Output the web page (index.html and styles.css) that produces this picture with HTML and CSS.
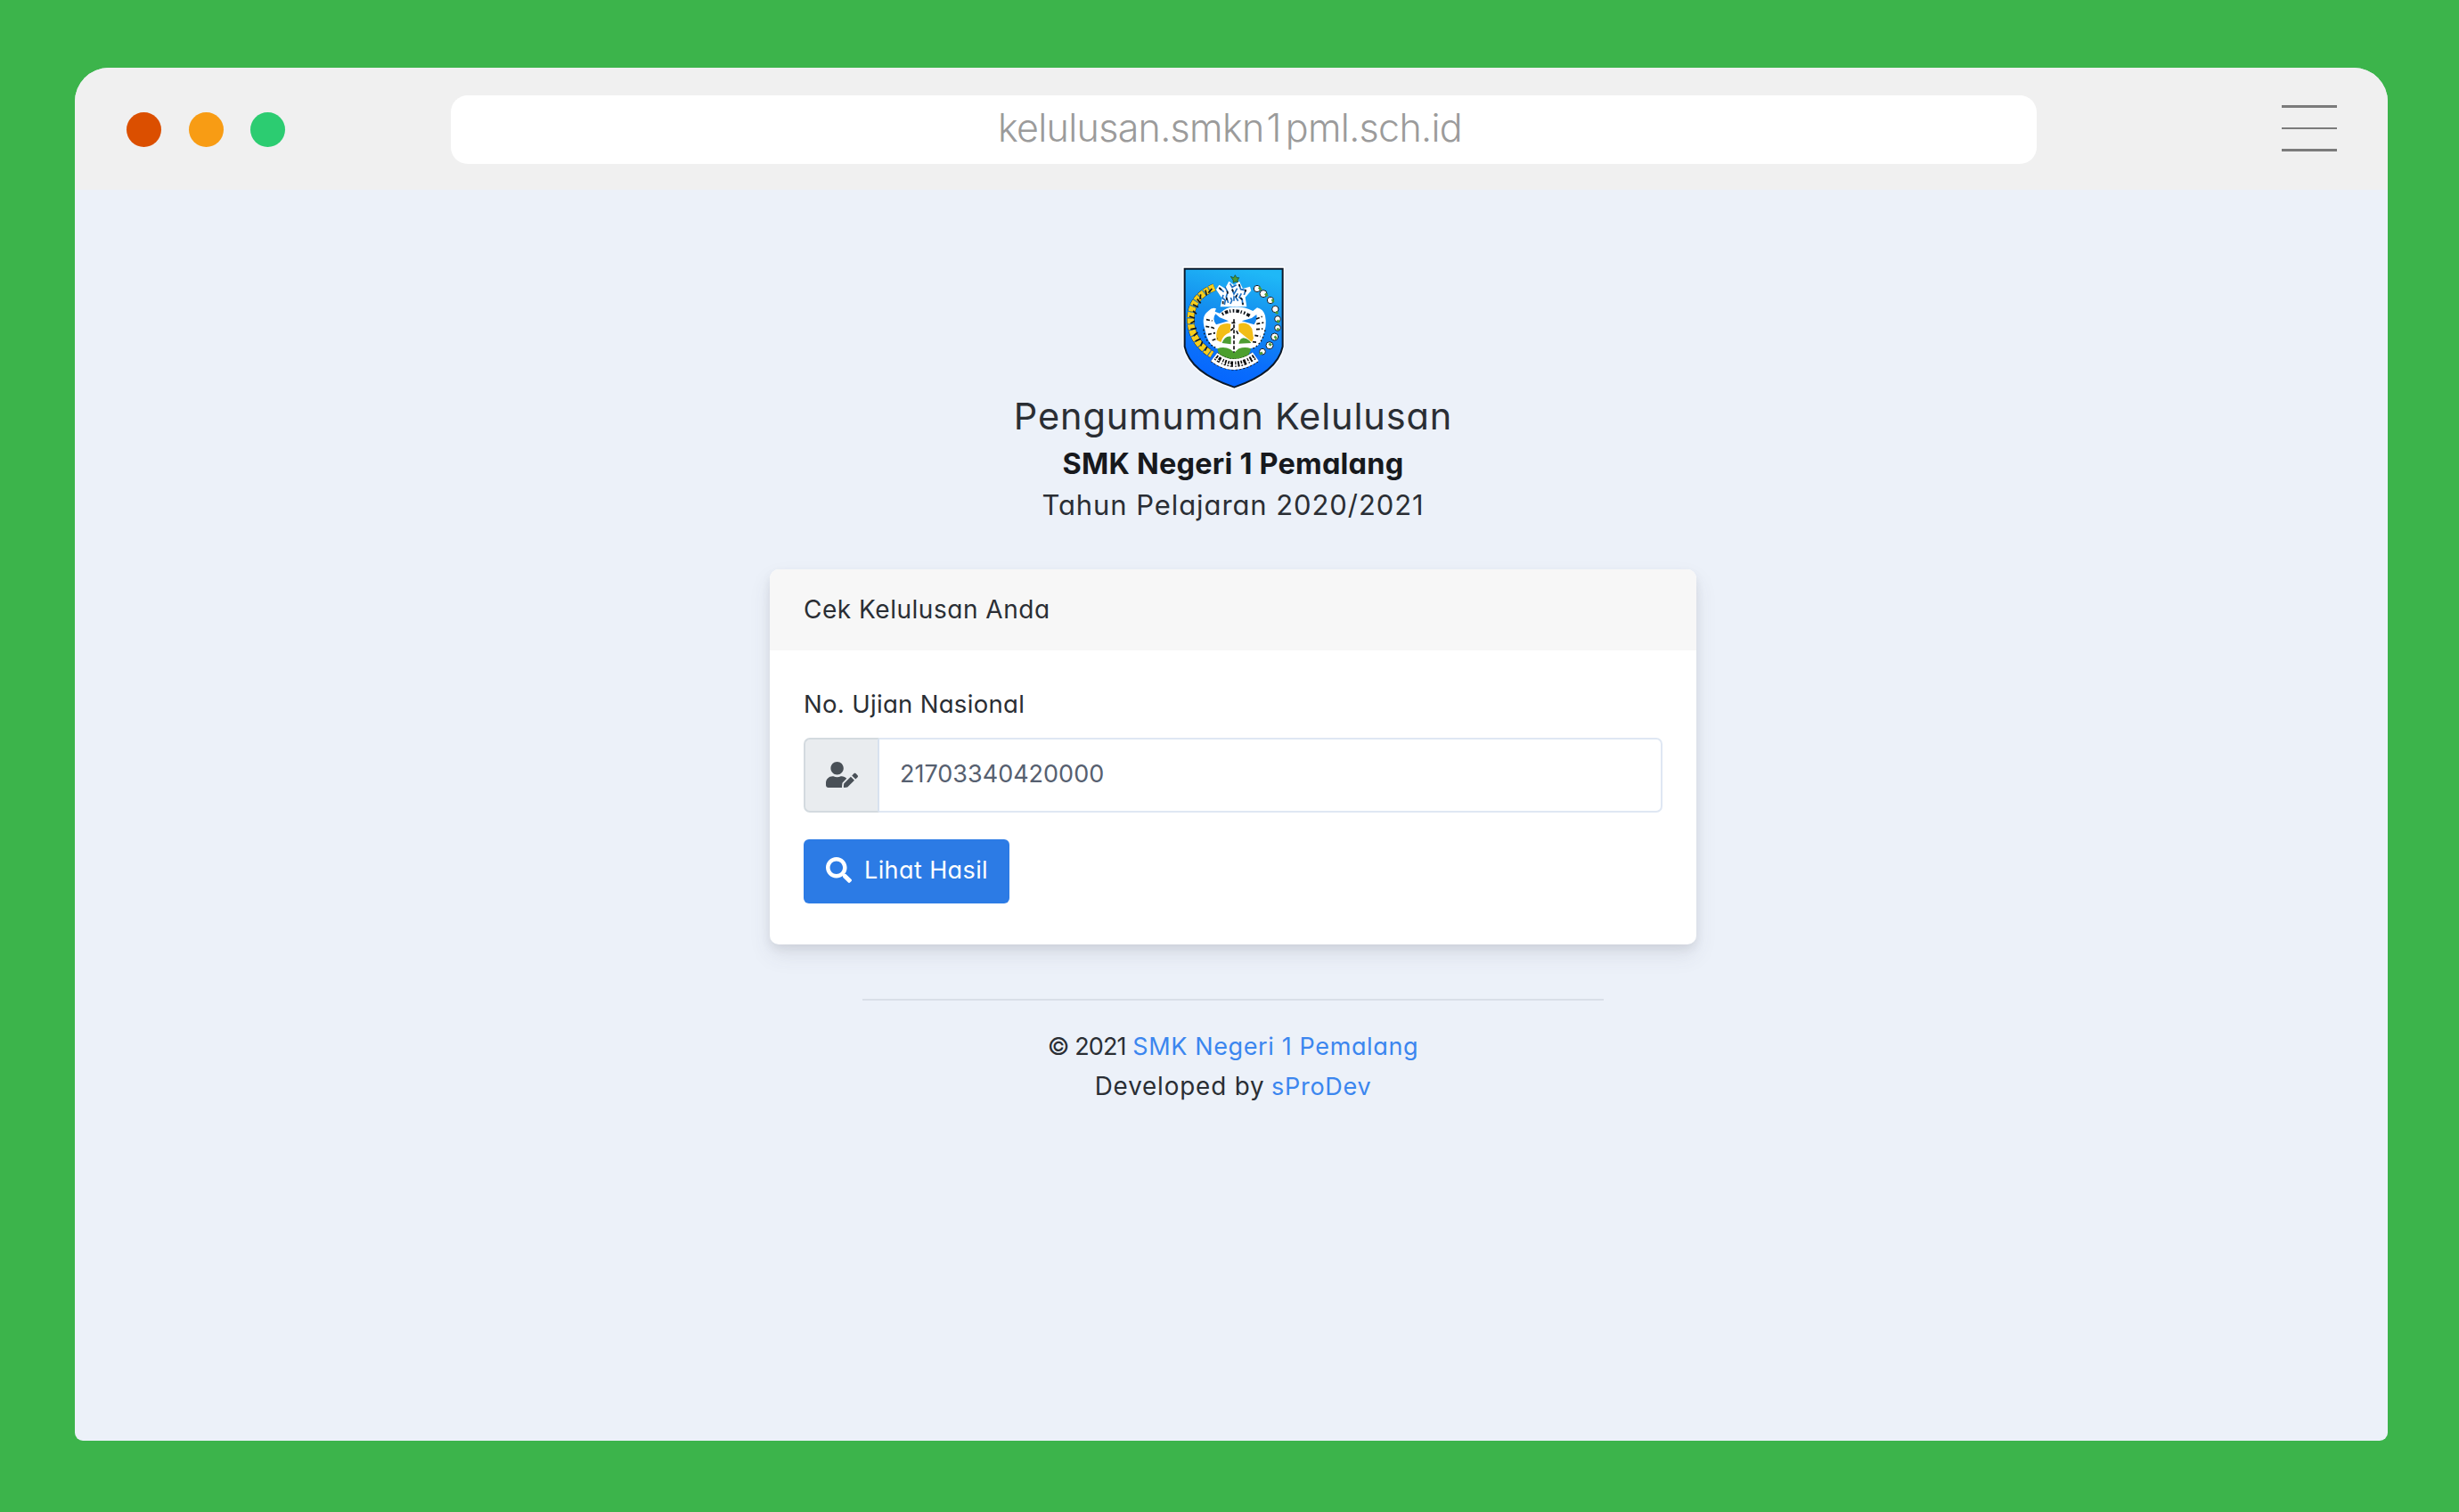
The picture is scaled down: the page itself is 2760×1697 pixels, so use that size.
FILE: index.html
```html
<!DOCTYPE html>
<html lang="id">
<head>
<meta charset="utf-8">
<title>Pengumuman Kelulusan</title>
<link rel="stylesheet" href="styles.css">
</head>
<body>
<div class="window">
  <header class="toolbar">
    <div class="dots"><span class="dot dot-close"></span><span class="dot dot-min"></span><span class="dot dot-max"></span></div>
    <div class="address"><span class="url">kelulusan.smkn<span class="digit">1</span>pml.sch.id</span></div>
    <div class="menu"><span></span><span></span><span></span></div>
  </header>
  <main class="page">
    <svg class="emblem" viewBox="50 28 345 414" aria-hidden="true">
      <defs>
        <linearGradient id="sky" x1="0.6" y1="0" x2="0.4" y2="1">
          <stop offset="0" stop-color="#1fb8f7"/><stop offset="0.35" stop-color="#1592ef"/><stop offset="0.75" stop-color="#0a6ffb"/><stop offset="1" stop-color="#0464ff"/>
        </linearGradient>
      </defs>
      <path d="M58 36H388V298Q370 385 225 435Q76 385 58 298Z" fill="none" stroke="#fff" stroke-width="14"/>
      <path d="M58 36H388V298Q370 385 225 435Q76 385 58 298Z" fill="url(#sky)" stroke="#0c1a2c" stroke-width="6"/>
      <!-- rice wreath -->
      <path d="M158 98Q80 130 78 205Q78 280 150 325" fill="none" stroke="#16181a" stroke-width="25" stroke-dasharray="17 3"/>
      <path d="M158 98Q80 130 78 205Q78 280 150 325" fill="none" stroke="#f6cd1c" stroke-width="23" stroke-dasharray="17 3"/>
      <path d="M150 103l-12 14M128 108l4 18M112 122l-2 17M100 138l12 14M86 156l18 9M86 178l12 10M74 196l18 6M78 220l14-8M78 240l20-4M88 262l14-12M94 280l18-8M112 296l6-15M126 312l8-14" stroke="#16181a" stroke-width="5"/>
      <!-- cotton wreath -->
      <g fill="#fff" stroke="#16202a" stroke-width="3">
        <circle cx="302" cy="103" r="11"/><circle cx="323" cy="120" r="12"/><circle cx="347" cy="142" r="11"/><circle cx="363" cy="172" r="11"/><circle cx="371" cy="205" r="10"/><circle cx="371" cy="235" r="10"/><circle cx="361" cy="265" r="12"/><circle cx="344" cy="294" r="12"/><circle cx="320" cy="315" r="10"/>
      </g>
      <path d="M308 98l8 10M329 119l8 9M353 138l4 10M364 181l8 6M370 209l6 8M369 242l6-5M361 263l6 9M342 288l8 6M310 324l10-6" stroke="#4c9a34" stroke-width="8"/>
      <path d="M213 62l10 4 5-9 5 9 8 0-5 9 3 7-9-3-8 4-1-9z" fill="#4c9a34" stroke="#1b3d16" stroke-width="2"/>
      <!-- plume -->
      <path d="M178 164L184 136 164 106 174 90 194 102 207 78 224 91 242 78 254 103 278 96 282 110 262 132 267 164Z" fill="#fff"/>
      <path d="M174 100l16 14M194 97l9 18-5 14 7 22M211 86l7 12 14-8M218 105l6 16 11-19M241 88l6 17 14 3M237 119l-7 13 8 12M188 124l-3 10 10 8-3 15M213 133l4 10-5 11M249 119l-7 13 10 8 1 15M264 106l-6 18M224 128v16" fill="none" stroke="#1c6ec0" stroke-width="5"/>
      <path d="M174 100l8 7M201 111l2 9M198 133l3 9M218 105l3 8M241 88l3 8M233 125l-3 7M187 145v10M246 133l6 7M254 150v8M264 106l-2 8" stroke="#10151c" stroke-width="5"/>
      <!-- wings -->
      <path d="M176 186Q202 163 225 165Q257 163 288 178L302 167Q323 172 329 194Q337 229 320 268Q309 303 278 305L228 318 162 303Q134 286 126 240Q112 196 138 178Q151 164 164 170L160 180Z" fill="#fff"/>
      <path d="M162 188l14 12 30 12-42 12Q149 206 162 188ZM300 190l-16 12-34 10 42 12Q304 206 300 190Z" fill="#1486ef"/>
      <path d="M166 276Q160 244 178 226Q197 216 213 222L211 250Q187 258 180 283Z" fill="#f2bd16"/>
      <path d="M240 222Q270 210 285 238L290 270 284 282 240 246Z" fill="#f2bd16"/>
      <path d="M184 286Q193 260 214 264V290Z" fill="#4d9d31"/><path d="M240 288Q248 256 276 278L282 286Z" fill="#4d9d31"/>
      <path d="M168 305Q190 296 212 307L225 318 240 305Q262 297 281 305Q276 342 225 350Q174 342 168 305Z" fill="#4c9f2e"/>
      <path d="M184 189Q226 164 277 194" fill="none" stroke="#10151c" stroke-width="11" stroke-dasharray="5 6 11 5 4 7"/>
      <path d="M224 206v112M216 218h18M213 244l12-10M238 256l-6-12M131 207l20 4M129 230l24 4 9 7M137 257l24-5M151 277l18-7M299 205l20-8M300 222l24-5M299 240l22-2M294 260l19 4M287 282l15 2" fill="none" stroke="#111" stroke-width="5" stroke-dasharray="12 6"/>
      <path d="M122 240Q126 287 166 303M329 242Q320 289 284 307" fill="none" stroke="#111" stroke-width="4" stroke-dasharray="5 7"/>
      <!-- name ribbon -->
      <path d="M157 333Q224 384 297 332" fill="none" stroke="#111" stroke-width="39" stroke-dasharray="6 5"/>
      <path d="M157 333Q224 384 297 332" fill="none" stroke="#fff" stroke-width="35"/>
      <path d="M163 334Q224 381 293 333" fill="none" stroke="#0d0d0d" stroke-width="19" stroke-dasharray="5 4 9 7 4 5 6 5"/>
      <path d="M162 338Q224 384 293 337" fill="none" stroke="#fff" stroke-width="4" stroke-dasharray="14 8"/>
    </svg>
    <h1 class="title">Pengumuman Kelulusan</h1>
    <h2 class="school">SMK Negeri 1 Pemalang</h2>
    <p class="year">Tahun Pelajaran 2020/2021</p>
    <section class="card">
      <div class="card-header">Cek Kelulusan Anda</div>
      <form class="card-body">
        <label class="label">No. Ujian Nasional</label>
        <div class="input-group">
          <span class="addon"><svg class="icon-user" viewBox="0 0 640 512"><path fill="currentColor" d="M224 256c70.7 0 128-57.3 128-128S294.7 0 224 0 96 57.3 96 128s57.3 128 128 128zm89.6 32h-16.7c-22.2 10.2-46.9 16-72.9 16s-50.6-5.8-72.9-16h-16.7C60.2 288 0 348.2 0 422.4V464c0 26.5 21.5 48 48 48h274.9c-2.4-6.8-3.4-14-2.6-21.3l6.8-60.9 1.2-11.1 7.9-7.9 77.3-77.3c-24.5-27.7-60-45.5-99.9-45.5zm45.3 145.3l-6.8 61c-1.1 10.2 7.5 18.8 17.6 17.6l60.9-6.8 137.9-137.9-71.7-71.7-137.9 137.8zM633 268.9L595.1 231c-9.3-9.3-24.5-9.3-33.8 0l-37.8 37.8-4.1 4.1 71.8 71.7 41.8-41.8c9.3-9.4 9.3-24.5 0-33.9z"/></svg></span>
          <span class="field">21703340420000</span>
        </div>
        <button class="button" type="button"><svg class="icon-search" viewBox="0 0 512 512"><path fill="currentColor" d="M505 442.7L405.3 343c-4.5-4.5-10.6-7-17-7H372c27.6-35.3 44-79.7 44-128C416 93.1 322.9 0 208 0S0 93.1 0 208s93.1 208 208 208c48.3 0 92.7-16.4 128-44v16.3c0 6.4 2.5 12.5 7 17l99.7 99.7c9.4 9.4 24.6 9.4 33.9 0l28.3-28.3c9.4-9.4 9.4-24.6.1-34zM208 336c-70.7 0-128-57.2-128-128 0-70.7 57.2-128 128-128 70.7 0 128 57.2 128 128 0 70.7-57.2 128-128 128z"/></svg><span class="button-text">Lihat Hasil</span></button>
      </form>
    </section>
    <hr class="rule">
    <footer class="footer">
      <div><span class="copyright">© 2021</span> <a class="school-link">SMK Negeri 1 Pemalang</a></div>
      <div><span class="developed">Developed by</span> <a class="dev-link">sProDev</a></div>
    </footer>
  </main>
</div>
</body>
</html>
```
FILE: styles.css
```css
* { box-sizing: border-box; }
body {
  margin: 0;
  height: 1697px;
  padding: 76px 80px 80px 84px;
  background: #3cb44b;
  color: #2a2e34;
  font-family: Inter, "Liberation Sans", sans-serif;
  font-feature-settings: "cv11";
  overflow: hidden;
}
.window {
  display: flex;
  flex-direction: column;
  height: 1541px;
  border-radius: 38px 38px 9px 9px;
  background: #ecf1f9;
  overflow: hidden;
}
.toolbar {
  display: grid;
  grid-template-columns: 422px 1780px 1fr;
  flex: none;
  align-items: center;
  height: 137px;
  background: #f0f0f0;
}
.dots { display: flex; gap: 30.7px; padding: 2px 0 0 58px; }
.dot { width: 39px; height: 39px; border-radius: 50%; }
.dot-close { background: #db4f00; }
.dot-min { background: #f89c14; }
.dot-max { background: #2ccc71; }
.address {
  display: flex;
  align-items: center;
  justify-content: center;
  height: 77px;
  margin-top: 2px;
  padding: 0 31px 5px 0;
  border-radius: 19px;
  background: #fff;
}
.url {
  color: #9b9b9b;
  font-size: 43px;
  font-weight: 300;
  letter-spacing: -0.7px;
  font-feature-settings: normal;
}
.digit { padding: 0 5px 0 3px; }
.menu {
  display: flex;
  flex-direction: column;
  justify-self: end;
  gap: 22px;
  width: 62px;
  margin: 0 57px 1px 0;
}
.menu span { height: 2.5px; background: #7b7b7b; }
.page {
  display: flex;
  flex-direction: column;
  align-items: center;
  padding: 86px 0 0 4px;
}
.emblem { width: 115px; height: 138px; }
.title, .school, .year { margin: 0; white-space: nowrap; }
.title { margin-top: 3px; font-size: 41.5px; line-height: 55px; font-weight: 400; letter-spacing: 0.85px; }
.school { padding-top: 1px; font-size: 32.5px; line-height: 50px; font-weight: 700; letter-spacing: 0.2px; color: #17191d; }
.year { margin-top: -1px; font-size: 31px; line-height: 44px; font-weight: 400; letter-spacing: 0.92px; }
.card {
  width: 1040px;
  height: 420.5px;
  margin-top: 50px;
  border-radius: 10px;
  background: #fff;
  font-size: 27px;
  box-shadow: 0 12px 25px rgba(65, 69, 88, .1), 0 5px 11px rgba(0, 0, 0, .07);
}
.card-header {
  display: flex;
  align-items: center;
  height: 90.5px;
  padding: 0 38px;
  border-radius: 10px 10px 0 0;
  background: #f7f7f7;
  font-size: 28px;
  letter-spacing: 0.52px;
}
.card-body { padding: 40px 38px; }
.label { display: block; height: 40px; line-height: 40px; font-size: 27.5px; letter-spacing: 0.32px; }
.input-group {
  display: flex;
  height: 84px;
  margin-top: 18px;
}
.addon {
  display: flex;
  align-items: center;
  justify-content: center;
  width: 85px;
  border: 2px solid #d3dadf;
  border-right-color: #d8e2ef;
  border-radius: 7px 0 0 7px;
  background: #e9ecef;
  color: #495057;
}
.icon-user { width: 36px; height: 29px; }
.field {
  display: flex;
  align-items: center;
  flex: 1;
  padding: 0 0 2px 23px;
  border: 2px solid #dfe7f3;
  border-left: 0;
  border-radius: 0 7px 7px 0;
  color: #566070;
}
.button {
  display: flex;
  align-items: center;
  width: 231px;
  height: 72px;
  margin-top: 30px;
  padding: 0 0 2px 25px;
  border: 0;
  border-radius: 6px;
  background: #2c7be5;
  color: #fff;
  font: inherit;
  gap: 14px;
}
.button-text { letter-spacing: 0.4px; }
.icon-search { width: 29px; height: 29px; }
.rule { width: 832px; height: 2px; margin: 61px 0 0; border: 0; background: #d9dfe8; }
.footer { margin-top: 30px; font-size: 27px; line-height: 44.5px; text-align: center; }
.footer a { color: #3b86ef; }
.copyright { letter-spacing: -0.9px; }
.school-link { letter-spacing: 0.63px; }
.developed { font-size: 27.8px; letter-spacing: 0.85px; }
.dev-link { letter-spacing: 0.7px; }
```
